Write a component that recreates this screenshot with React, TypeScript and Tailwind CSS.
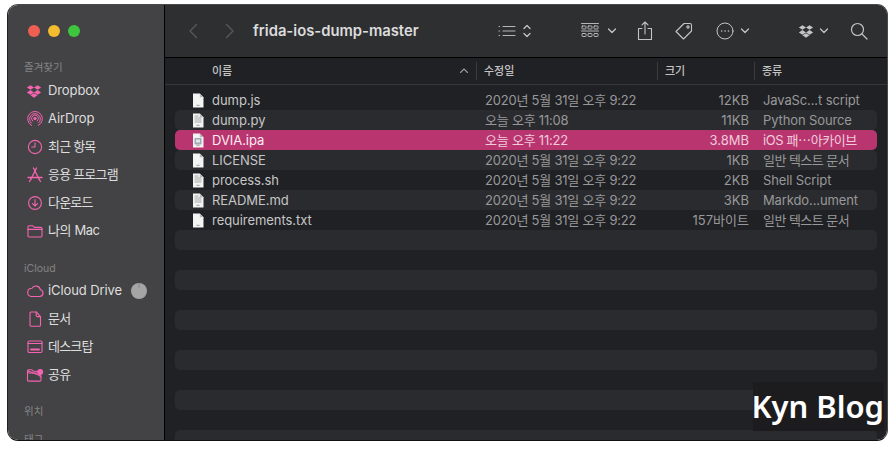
import { FC, ReactNode } from "react";

const pink = "#f564b0";

const Icon: FC<{ w?: number; h?: number; vb?: string; color?: string; sw?: number; children: ReactNode }> = ({
  w = 18,
  h = 18,
  vb,
  color = pink,
  sw = 1.1,
  children,
}) => (
  <svg
    width={w}
    height={h}
    viewBox={vb ?? `0 0 ${w} ${h}`}
    fill="none"
    stroke={color}
    strokeWidth={sw}
    strokeLinecap="round"
    strokeLinejoin="round"
  >
    {children}
  </svg>
);

const DropboxGlyph: FC<{ color: string }> = ({ color }) => (
  <Icon w={16} h={16} vb="0 0 18 18" color={color} sw={0}>
    <g fill={color}>
      <path d="M5 2.5 9 5 5 7.7 1 5z" />
      <path d="M13 2.5 17 5l-4 2.7L9 5z" />
      <path d="M5 8 9 10.6 5 13.2 1 10.6z" />
      <path d="M13 8l4 2.6-4 2.6-4-2.6z" />
      <path d="M9 11.5l4 2.4-4 2.6-4-2.6z" />
    </g>
  </Icon>
);

const sidebarIcons: Record<string, ReactNode> = {
  dropbox: <DropboxGlyph color={pink} />,
  airdrop: (
    <Icon w={18} h={18} sw={1}>
      <circle cx="9" cy="8.500" r="1.200" fill={pink} />
      <path d="M6.700 11a3.400 3.400 0 1 1 4.600 0" />
      <path d="M5.300 13a5.400 5.400 0 1 1 7.400 0" />
      <path d="M5.700 15.500a7.400 7.400 0 1 1 6.600 0" />
    </Icon>
  ),
  clock: (
    <Icon>
      <circle cx="9" cy="9" r="6.600" />
      <path d="M9 4.800V9H5.800" />
    </Icon>
  ),
  apps: (
    <Icon sw={1.300}>
      <path d="M10.500 2 5 13" />
      <path d="M7.500 2 13 13" />
      <path d="M2 11.500h14" />
      <path d="M3.500 15.500 5 13M14.500 15.500 13 13" />
    </Icon>
  ),
  download: (
    <Icon>
      <circle cx="9" cy="9" r="6.400" />
      <path d="M9 5.500v6.500M6.500 9.600 9 12l2.500-2.400" />
    </Icon>
  ),
  folder: (
    <Icon>
      <path d="M2 5c0-.8.400-1.200 1.200-1.200h3.600L8.400 5.400h6.400c.8 0 1.200.4 1.200 1.200v7.200c0 .8-.4 1.200-1.200 1.200H3.200c-.8 0-1.200-.4-1.200-1.200z" />
      <path d="M2 7.400h14" />
    </Icon>
  ),
  cloud: (
    <Icon w={18} h={18}>
      <path d="M5 14.500h8.800a3.400 3.400 0 0 0 .6-6.700A4.600 4.600 0 0 0 6 6.200a4.200 4.200 0 0 0-1 8.300z" />
    </Icon>
  ),
  doc: (
    <Icon>
      <path d="M4 3.200c0-.7.400-1.200 1.200-1.200h5L14.500 6.600V15c0 .8-.5 1.300-1.300 1.300H5.200C4.400 16.300 4 15.800 4 15z" />
      <path d="M10.200 2v3.400c0 .8.400 1.200 1.200 1.200h3.100" />
    </Icon>
  ),
  desktop: (
    <Icon>
      <rect x="2" y="3" width="14" height="11.500" rx="1.200" />
      <path d="M2 5.500h14" />
      <path d="M5 11.500h8" strokeWidth="1.800" />
    </Icon>
  ),
  shared: (
    <Icon>
      <path d="M1.500 4.800c0-.7.400-1.100 1.100-1.100h3l1.500 1.500h4.400M15 10v4c0 .7-.4 1.100-1.100 1.100H2.600c-.7 0-1.100-.4-1.100-1.100V4.800z" />
      <path d="M1.500 7h10" />
      <circle cx="14.200" cy="6" r="2.400" fill={pink} />
      <path d="M14.200 8.400v2.800" />
    </Icon>
  ),
};

const favorites = [
  ["dropbox", "Dropbox"],
  ["airdrop", "AirDrop"],
  ["clock", "최근 항목"],
  ["apps", "응용 프로그램"],
  ["download", "다운로드"],
  ["folder", "나의 Mac"],
];

const icloud = [
  ["cloud", "iCloud Drive"],
  ["doc", "문서"],
  ["desktop", "데스크탑"],
  ["shared", "공유"],
];

const files = [
  { name: "dump.js", date: "2020년 5월 31일 오후 9:22", size: "12KB", kind: "JavaSc...t script", tag: "js" },
  { name: "dump.py", date: "오늘 오후 11:08", size: "11KB", kind: "Python Source", tag: "lines" },
  { name: "DVIA.ipa", date: "오늘 오후 11:22", size: "3.8MB", kind: "iOS 패⋯아카이브", tag: "ipa" },
  { name: "LICENSE", date: "2020년 5월 31일 오후 9:22", size: "1KB", kind: "일반 텍스트 문서", tag: "" },
  { name: "process.sh", date: "2020년 5월 31일 오후 9:22", size: "2KB", kind: "Shell Script", tag: "lines" },
  { name: "README.md", date: "2020년 5월 31일 오후 9:22", size: "3KB", kind: "Markdo...ument", tag: "lines" },
  { name: "requirements.txt", date: "2020년 5월 31일 오후 9:22", size: "157바이트", kind: "일반 텍스트 문서", tag: "" },
];

const FileIcon: FC<{ tag: string }> = ({ tag }) => (
  <svg width="12" height="15" viewBox="0 0 12 15">
    <path d="M1 .5h6.800L11.500 4.200V14.500H1z" fill="#f4f4f4" />
    <path d="M7.800.5v3.700h3.700z" fill="#b9b9b9" />
    {tag === "lines" && (
      <path d="M2.500 3h4M2.500 5h7M2.500 7h7M2.500 9h7" stroke="#a8a8a8" strokeWidth="1" />
    )}
    {tag === "ipa" && (
      <g>
        <rect x="2.500" y="5" width="7" height="6.500" rx="1" fill="#9fa9b5" />
        <rect x="4" y="6.500" width="4" height="3" fill="#e4e7ea" />
      </g>
    )}
    <path d="M4.500 12.300h3" stroke="#9a9a9a" strokeWidth="1" />
  </svg>
);

const SmallChevron: FC = () => (
  <Icon w={10} h={8} color="#c4c4c5" sw={1.300}>
    <path d="M1.500 2 5 5.500 8.500 2" />
  </Icon>
);

const Toolbar: FC = () => (
  <div className="h-[53px] shrink-0 flex items-center bg-[#2e2f31] border-b border-black font-semibold">
    <div className="ml-[22px] flex items-center gap-[25px]">
      <Icon w={12} h={18} color="#59595b" sw={1.300}>
        <path d="M9.500 2.500 3 9l6.500 6.500" />
      </Icon>
      <Icon w={12} h={18} color="#59595b" sw={1.300}>
        <path d="M2.500 2.500 9 9l-6.500 6.500" />
      </Icon>
    </div>
    <span className="ml-[17px] w-[245px] text-[14.800px] text-[#dcdcdd]">frida-ios-dump-master</span>
    <div className="flex items-center gap-[6px]">
      <Icon w={18} h={14} color="#b5b5b6" sw={1.100}>
        <path d="M1 2.500h.6M1 7h.6M1 11.500h.6M5 2.500h12M5 7h12M5 11.500h12" />
      </Icon>
      <Icon w={10} h={16} color="#c4c4c5" sw={1.300}>
        <path d="M2 5.500 5 2.500 8 5.500M2 10.500 5 13.500 8 10.500" />
      </Icon>
    </div>
    <div className="ml-[49px] flex items-center gap-[8px]">
      <Icon w={18} h={18} color="#b5b5b6" sw={1}>
        <path d="M.500 1.500h17" />
        <rect x="1" y="4" width="4" height="3" rx=".6" />
        <rect x="7" y="4" width="4" height="3" rx=".6" />
        <rect x="13" y="4" width="4" height="3" rx=".6" />
        <path d="M.500 9h17" />
        <rect x="1" y="11.500" width="4" height="3" rx=".6" />
        <rect x="7" y="11.500" width="4" height="3" rx=".6" />
        <rect x="13" y="11.500" width="4" height="3" rx=".6" />
      </Icon>
      <SmallChevron />
    </div>
    <div className="ml-[20px]">
      <Icon w={16} h={20} color="#c4c4c5" sw={1.100}>
        <path d="M5 7.500H1.500v11h13v-11H11" />
        <path d="M8 13V1M5 3.800 8 1l3 2.800" />
      </Icon>
    </div>
    <div className="ml-[21px]">
      <Icon w={20} h={20} color="#c4c4c5" sw={1.100}>
        <path d="M10 2.500h6c.9 0 1.500.6 1.500 1.500v6L9.500 18 2 10.500z" />
        <circle cx="14" cy="6" r="1.100" />
      </Icon>
    </div>
    <div className="ml-[22px] flex items-center gap-[6px]">
      <Icon w={18} h={18} color="#c4c4c5" sw={1}>
        <circle cx="9" cy="9" r="8" />
        <path d="M5.600 9h.1M9 9h.1M12.400 9h.1" strokeWidth="1.500" />
      </Icon>
      <SmallChevron />
    </div>
    <div className="ml-[48px] flex items-center gap-[5px]">
      <DropboxGlyph color="#c4c4c5" />
      <SmallChevron />
    </div>
    <div className="ml-[21px]">
      <Icon w={18} h={18} color="#c4c4c5" sw={1.200}>
        <circle cx="7.500" cy="7.500" r="6" />
        <path d="M12 12l5 5" />
      </Icon>
    </div>
  </div>
);

const Header: FC = () => (
  <div className="h-[27px] shrink-0 flex items-center bg-[#202124] border-b border-[#37383a] text-[11px] font-medium text-[#c4c4c5]">
    <div className="w-[312px] pl-[47px] flex items-center justify-between pr-[7px] border-r border-[#3a3b3d] h-[18px]">
      <span>이름</span>
      <Icon w={10} h={8} color="#9b9b9c" sw={1.100}>
        <path d="M1.500 5.500 5 2l3.500 3.500" />
      </Icon>
    </div>
    <div className="w-[181px] pl-[7px] flex items-center border-r border-[#3a3b3d] h-[18px]">수정일</div>
    <div className="w-[97px] pl-[7px] flex items-center border-r border-[#3a3b3d] h-[18px]">크기</div>
    <div className="pl-[7px]">종류</div>
  </div>
);

const hasHangul = (text: string) => /[가-힣]/.test(text);
const hasLatin = (text: string) => /[A-Za-z]/.test(text);

const FileRow: FC<{ file: (typeof files)[number]; index: number }> = ({ file, index }) => {
  const selected = file.name === "DVIA.ipa";
  const dim = selected ? "text-[#f0cbdc]" : "text-[#98989a]";
  return (
    <div
      className={`h-5 flex items-center rounded-[5px] ${
        selected ? "bg-[#b9356f]" : index % 2 === 1 ? "bg-[#2a2b2e]" : ""
      }`}
    >
      <div className="w-[37px] pl-[17px] flex items-center">
        <FileIcon tag={file.tag} />
      </div>
      <span className={`w-[273px] tracking-[-0.05px] ${selected ? "text-[#fbeef4]" : "text-[#c6c6c7]"}`}>{file.name}</span>
      <span className={`w-[200px] tracking-[-0.22px] ${dim}`}>{file.date}</span>
      <span className={`w-[64px] text-right ${dim}`}>{file.size}</span>
      <span
        className={`ml-[14px] whitespace-nowrap ${
          hasHangul(file.kind) ? (selected ? "tracking-[-0.4px]" : "tracking-[-0.55px]") : "tracking-[-0.12px]"
        } ${dim}`}
      >
        {file.kind}
      </span>
    </div>
  );
};

const sidebarTracking = (label: string) => {
  if (!hasHangul(label)) return "tracking-[-0.1px]";
  return hasLatin(label) ? "tracking-[-0.4px]" : "tracking-[-0.8px]";
};

const SidebarItem: FC<{ icon: string; label: string; extra?: ReactNode }> = ({ icon, label, extra }) => (
  <div className="h-7 flex items-center pl-[18px] text-[13px] text-[#dedede]">
    <span className="w-[22px] flex items-center">{sidebarIcons[icon]}</span>
    <span className={sidebarTracking(label)}>{label}</span>
    {extra}
  </div>
);

const App: FC = () => {
  const stripes = [0, 1, 2, 3, 4, 5];
  return (
    <div
      className="w-[896px] h-[449px] bg-white pt-1 pl-[7px] overflow-hidden"
      style={{ fontFamily: 'Inter, "Noto Sans CJK KR", sans-serif' }}
    >
      <div className="relative w-[881px] h-[437px] flex overflow-hidden rounded-[11px] border border-[#4a4a4b] border-b-[#111] border-l-[#222]">
        <aside className="w-[157px] shrink-0 bg-[#434345] border-r border-black overflow-hidden">
          <div className="pl-5 pt-5 flex gap-2">
            <span className="w-3 h-3 rounded-full bg-[#ee5f52]" />
            <span className="w-3 h-3 rounded-full bg-[#f4bc2f]" />
            <span className="w-3 h-3 rounded-full bg-[#3fc63f]" />
          </div>
          <p className="pl-4 mt-[22px] h-[18px] text-[10.500px] leading-[18px] text-[#838384]">즐겨찾기</p>
          {favorites.map(([icon, label]) => (
            <SidebarItem key={label} icon={icon} label={label} />
          ))}
          <p className="pl-4 mt-[15px] h-[17px] text-[10.500px] leading-[18px] text-[#838384]">iCloud</p>
          {icloud.map(([icon, label]) => (
            <SidebarItem
              key={label}
              icon={icon}
              label={label}
              extra={
                icon === "cloud" ? (
                  <svg className="ml-[9px]" width="16" height="16" viewBox="0 0 16 16">
                    <circle cx="8" cy="8" r="8" fill="#a5a5a6" />
                    <path d="M8 0v5" stroke="#7d7d7e" strokeWidth="0.7" />
                  </svg>
                ) : undefined
              }
            />
          ))}
          <p className="pl-4 mt-[14px] h-[18px] text-[10.500px] leading-[18px] text-[#838384]">위치</p>
          <p className="pl-4 mt-[10px] h-[18px] text-[10.500px] leading-[18px] text-[#838384]">태그</p>
        </aside>
        <main className="flex-1 min-w-0 flex flex-col bg-[#202124]">
          <Toolbar />
          <Header />
          <div className="px-[10px] pt-[5px] text-[13px] leading-5 overflow-hidden">
            {files.map((file, index) => (
              <FileRow key={file.name} file={file} index={index} />
            ))}
            {stripes.map((n) => (
              <div key={n} className={`h-5 rounded-[5px] ${n % 2 === 0 ? "bg-[#2a2b2e]" : ""}`} />
            ))}
            {stripes.map((n) => (
              <div key={`more-${n}`} className={`h-5 rounded-[5px] ${n % 2 === 0 ? "bg-[#2a2b2e]" : ""}`} />
            ))}
          </div>
        </main>
        <div
          className="absolute left-[745px] top-[377px] h-[49px] w-[131px] bg-[#1c1c1e] flex items-center justify-end whitespace-nowrap text-[31px] font-semibold text-white"
          style={{ fontFamily: '"Noto Sans", sans-serif' }}
        >
          Kyn Blog
        </div>
      </div>
    </div>
  );
};

export default App;
